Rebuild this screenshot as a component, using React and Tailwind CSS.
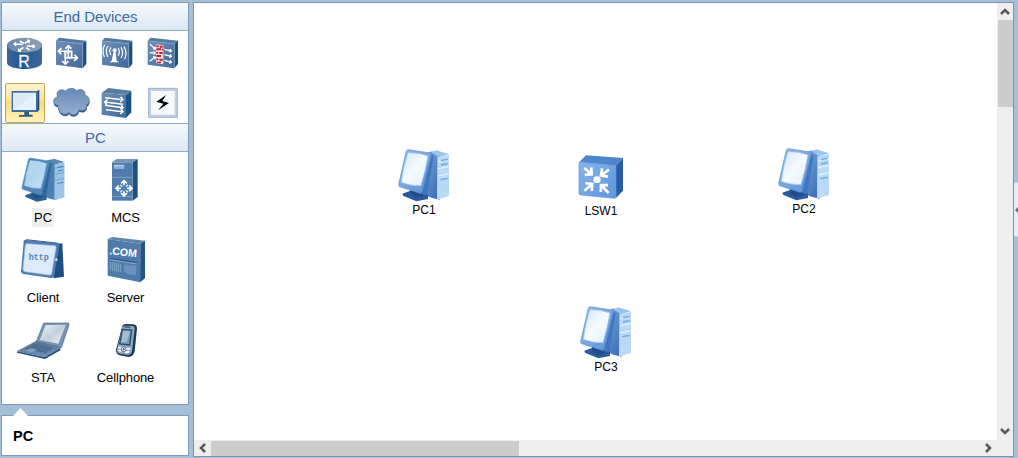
import React from "react";

const Defs = () => (
  <svg className="absolute h-0 w-0" aria-hidden="true">
    <defs>
      <linearGradient id="face" x1="0" y1="0" x2="1" y2="1">
        <stop offset="0" stopColor="#6f90b8" />
        <stop offset="1" stopColor="#42699a" />
      </linearGradient>
      <linearGradient id="drum" x1="0" y1="0" x2="1" y2="0">
        <stop offset="0" stopColor="#3b6698" />
        <stop offset="0.4" stopColor="#215a93" />
        <stop offset="1" stopColor="#3d6799" />
      </linearGradient>
      <linearGradient id="drumTop" x1="0" y1="0" x2="1" y2="0">
        <stop offset="0" stopColor="#6b88ad" />
        <stop offset="1" stopColor="#8d9fb9" />
      </linearGradient>
      <linearGradient id="cloud" x1="0" y1="0" x2="0" y2="1">
        <stop offset="0" stopColor="#6488b8" />
        <stop offset="1" stopColor="#9daed0" />
      </linearGradient>
      <linearGradient id="screen" x1="0" y1="0" x2="1" y2="1">
        <stop offset="0" stopColor="#d2e6f8" />
        <stop offset="0.5" stopColor="#f5faff" />
        <stop offset="1" stopColor="#e2effb" />
      </linearGradient>
      <linearGradient id="screenDim" x1="0" y1="0" x2="1" y2="1">
        <stop offset="0" stopColor="#9fc8e8" />
        <stop offset="1" stopColor="#c5e0f5" />
      </linearGradient>
      <linearGradient id="bezel" x1="0" y1="0" x2="1" y2="1">
        <stop offset="0" stopColor="#94bdea" />
        <stop offset="1" stopColor="#5a91d2" />
      </linearGradient>
      <linearGradient id="tower" x1="0" y1="0" x2="1" y2="1">
        <stop offset="0" stopColor="#7facdf" />
        <stop offset="1" stopColor="#3668b2" />
      </linearGradient>
      <linearGradient id="lsw" x1="0" y1="0" x2="1" y2="1">
        <stop offset="0" stopColor="#86b5ee" />
        <stop offset="1" stopColor="#5c95d8" />
      </linearGradient>
      <linearGradient id="laptop" x1="0" y1="0" x2="1" y2="1">
        <stop offset="0" stopColor="#edf3f9" />
        <stop offset="0.5" stopColor="#c2cfdf" />
        <stop offset="1" stopColor="#eef3f9" />
      </linearGradient>
      <linearGradient id="keys" x1="0" y1="0" x2="0" y2="1">
        <stop offset="0" stopColor="#587493" />
        <stop offset="1" stopColor="#6c8eb7" />
      </linearGradient>
      <linearGradient id="gold" x1="0" y1="0" x2="0" y2="1">
        <stop offset="0" stopColor="#fdf2cf" />
        <stop offset="0.4" stopColor="#fde7a5" />
        <stop offset="0.45" stopColor="#fcd97c" />
        <stop offset="1" stopColor="#fff5be" />
      </linearGradient>
    </defs>
  </svg>
);

const Arrow = ({ x1, y1, x2, y2, h = 7, w = 4, c = "#fff" }) => {
  const a = Math.atan2(y2 - y1, x2 - x1);
  const p = (d) => `${x2 - h * Math.cos(a + d)} ${y2 - h * Math.sin(a + d)}`;
  return (
    <path
      d={`M${x1} ${y1}L${x2} ${y2}M${p(0.8)}L${x2} ${y2}L${p(-0.8)}`}
      fill="none"
      stroke={c}
      strokeWidth={w}
    />
  );
};

const Block = ({ x, y }) => (
  <g transform={`translate(${x} ${y})`}>
    <path d="M0 9L9 0L91 9L80 18Z" fill="#52799f" />
    <path d="M80 18L91 9V79L80 92Z" fill="#195080" />
    <path d="M0 9L80 18V92L0 81Z" fill="url(#face)" />
    <path d="M1 10L80 18.500V91" fill="none" stroke="#8ba7c7" strokeWidth="1.500" />
  </g>
);

const Router = () => (
  <svg viewBox="6 93 138 138" className="size-[46px]">
    <path d="M21 134V188C23 213 124 213 126 188V134Z" fill="url(#drum)" />
    <ellipse cx="73.500" cy="136" rx="52.500" ry="22" fill="url(#drumTop)" stroke="#58779f" />
    <Arrow x1={68} y1={133} x2={43} y2={132} w={5} />
    <Arrow x1={81} y1={138} x2={103} y2={139} w={5} />
    <Arrow x1={74} y1={130} x2={88} y2={122} w={5} />
    <Arrow x1={70} y1={142} x2={56} y2={153} w={5} />
    <path d="M59 123L72 130M78 143L89 150" stroke="#fff" strokeWidth="5" />
    <text x="55" y="202" fontFamily="Liberation Sans" fontSize="48" fill="#f0f5fa" stroke="#f0f5fa">R</text>
  </svg>
);

const Switch = () => (
  <svg viewBox="144 93 138 138" className="size-[46px]">
    <Block x={168} y={113} />
    <path d="M196 154H215V174H196Z" fill="none" stroke="#fff" strokeWidth="5" />
    <Arrow x1={205} y1={174} x2={205} y2={137} h={13} w={5} />
    <Arrow x1={196} y1={154} x2={196} y2={192} h={13} w={5} />
    <Arrow x1={210} y1={155} x2={175} y2={153} h={13} w={5} />
    <Arrow x1={202} y1={172} x2={232} y2={174} h={13} w={5} />
  </svg>
);

const Wireless = () => (
  <svg viewBox="-3 93 138 138" className="size-[46px]">
    <Block x={21} y={113} />
    <circle cx="59" cy="151" r="6" fill="#fff" />
    <path d="M57 151L50 182L44 187H73L65 182L61 151Z" fill="#fff" />
    <path d="M48 142Q40 153 48 165M39 138Q29 153 39 171M29 134Q20 151 28 171M69 144Q77 155 69 167M78 142Q88 158 78 174M87 140Q98 158 89 178" fill="none" stroke="#fff" strokeWidth="3.500" />
  </svg>
);

const Firewall = () => (
  <svg viewBox="135 93 138 138" className="size-[46px]">
    <Block x={158} y={113} />
    <path d="M183 133L205 136V193L183 190Z" fill="#f3e8e8" />
    <path d="M184 136H191V142H184ZM194 137H203V143H194ZM184 145H198V151H184ZM201 146H204V152H201ZM184 155H190V161H184ZM193 156H203V162H193ZM184 165H198V171H184ZM184 175H190V181H184ZM193 176H203V182H193ZM185 185H198V190H185Z" fill="#bf1e2e" />
    <Arrow x1={165} y1={133} x2={181} y2={147} />
    <Arrow x1={164} y1={158} x2={181} y2={159} />
    <Arrow x1={164} y1={184} x2={181} y2={171} />
    <Arrow x1={208} y1={148} x2={229} y2={153} />
    <Arrow x1={208} y1={164} x2={229} y2={169} />
    <Arrow x1={208} y1={181} x2={229} y2={187} />
  </svg>
);

const EndDevice = () => (
  <svg viewBox="6 -3 138 138" className="size-[46px]">
    <rect x="16.500" y="16.500" width="117" height="117" rx="5" fill="url(#gold)" stroke="#c4a153" strokeWidth="3" />
    <path d="M112 38L118 35V96L111 102Z" fill="#1e4c7c" />
    <path d="M35 39H113V102H35Z" fill="#3f6b9d" />
    <path d="M39 44H108V96H39Z" fill="#dbe9f8" />
    <path d="M39 96L108 44V96Z" fill="#e7f1fc" />
    <path d="M73 102H87V110H98V116H57V111H73Z" fill="#2d5987" />
  </svg>
);

const cloudPath =
  "M174 82C155 80 157 60 173 56C165 40 183 29 197 39C205 29 222 28 229 38C244 29 259 39 254 51C271 55 272 73 260 80C261 96 247 101 237 95C232 112 213 115 207 103C194 116 173 105 174 82Z";

const Cloud = () => (
  <svg viewBox="144 -3 138 138" className="size-[46px]">
    <path d={cloudPath} transform="translate(1 6)" fill="#315f91" />
    <path d={cloudPath} fill="url(#cloud)" stroke="#54789f" strokeWidth="2" />
  </svg>
);

const Lines = () => (
  <svg viewBox="-3 -3 138 138" className="size-[46px]">
    <path d="M20 44L40 30L109 38L93 51Z" fill="#5b7f9f" />
    <path d="M93 51L109 38V103L93 120Z" fill="#1c5386" />
    <path d="M20 44L93 51V120L20 110Z" fill="url(#face)" />
    <Arrow x1={30} y1={59} x2={84} y2={65} h={11} w={4.5} />
    <Arrow x1={84} y1={79} x2={29} y2={72} h={11} w={4.5} />
    <Arrow x1={30} y1={82} x2={84} y2={89} h={9} w={4.5} />
    <Arrow x1={33} y1={95} x2={84} y2={101} h={11} w={4.5} />
  </svg>
);

const Bolt = () => (
  <svg viewBox="135 -3 138 138" className="size-[46px]">
    <rect x="161" y="31" width="86" height="87" fill="#c1d0e2" stroke="#9db2cc" strokeWidth="3" />
    <path d="M168 39H239V110H168Z" fill="#f8f9fb" />
    <path d="M213 51L184 71L205 77L189 97L222 75L202 69Z" fill="#08090b" />
  </svg>
);

const Computer = ({ dim, ...rest }) => (
  <svg viewBox="35 35 168 168" {...rest}>
    <path d="M119 54L143 45L166 56V190L141 184L110 170Z" fill={dim ? "#4c7fb2" : "url(#tower)"} />
    <path d="M141 48L156 42L194 54L163 63Z" fill={dim ? "#5d88b2" : "#98c4ec"} />
    <path d="M159 63L194 56V179L158 190Z" fill={dim ? "#9bc4e6" : "#b9d9f6"} />
    <path d="M161 76L194 70M161 97L194 91M161 119L194 112" stroke={dim ? "#6d9fce" : "#eef8ff"} strokeWidth="3" />
    <path d="M170 73L190 69M170 86L190 82M168 130L190 126" stroke={dim ? "#4f86ba" : "#6da2dc"} strokeWidth="4" />
    <path d="M54 172L82 162L131 174V188L96 195L56 178Z" fill={dim ? "#2c6094" : "#2c5a9e"} />
    <path d="M76 152L112 164L116 180L92 184L78 172Z" fill={dim ? "#225488" : "#234a8c"} />
    <path d="M138 52L148 60L129 176L104 171Z" fill={dim ? "#2f689f" : "#4078c0"} />
    <path d="M66 44Q68 40 73 40L137 50Q142 51 141 56L113 167Q111 172 105 170L46 151Q42 149 43 144Z" fill={dim ? "#5085b8" : "url(#bezel)"} stroke={dim ? "#5c8fbc" : "#5e90c8"} strokeWidth="2" />
    <path d="M71 49Q102 48 131 59Q124 101 110 148Q78 149 51 138Q57 90 71 49Z" fill={dim ? "url(#screenDim)" : "url(#screen)"} stroke={dim ? "#79a9d3" : "#a0c5ed"} strokeWidth="2" />
    {dim && <path d="M72 50Q102 49 130 60Q118 78 117 107Q84 94 58 101Z" fill="#b7d9f1" opacity=".7" />}
  </svg>
);

const PcItem = () => (
  <svg viewBox="6 6 246 168" className="h-14 w-[82px]">
    <Computer dim x="59" y="20" width="142" height="142" />
  </svg>
);

const Mcs = () => (
  <svg viewBox="252 6 246 168" className="h-14 w-[82px]">
    <path d="M336 37L350 27H413L398 37Z" fill="#7894b2" />
    <path d="M398 37L413 27V141L398 152Z" fill="#1f5080" />
    <path d="M336 37H398V152H336Z" fill="#4e7cad" />
    <path d="M343 45H373V57H343Z" fill="#8db2d5" />
    <path d="M344 54V46H372" fill="none" stroke="#d7e9f8" strokeWidth="2" />
    <path d="M336 82H398M336 140H398" stroke="#91b4d4" strokeWidth="2" />
    <Arrow x1={372} y1={106} x2={372} y2={92} h={12} w={5} />
    <Arrow x1={372} y1={124} x2={372} y2={138} h={12} w={5} />
    <Arrow x1={363} y1={115} x2={348} y2={115} h={12} w={5} />
    <Arrow x1={381} y1={115} x2={396} y2={115} h={12} w={5} />
    <path d="M361 104L367 110M378 110L384 104M361 127L367 121M378 121L384 127" stroke="#d8e7f5" strokeWidth="4" />
  </svg>
);

const Client = () => (
  <svg viewBox="6 246 246 168" className="h-14 w-[82px]">
    <path d="M176 281L187 280L192 380L160 385Z" fill="#1d4f83" />
    <path d="M79 270Q72 270 71 275L63 364Q63 370 70 372L153 384Q160 385 162 379L178 286Q179 281 173 280Z" fill="#4e7daf" />
    <path d="M84 281Q77 280 76 286L69 358Q69 364 75 365L148 375Q154 376 155 371L168 293Q169 288 164 287Z" fill="#dceafb" stroke="#9fbfdf" strokeWidth="2" />
    <path d="M71 275L79 269L176 280" fill="none" stroke="#365f8e" strokeWidth="3" />
    <circle cx="169" cy="329" r="3.500" fill="#edf6ff" />
    <text x="86" y="331" fontFamily="Liberation Mono" fontSize="25" fontWeight="bold" fill="#5983b3">http</text>
  </svg>
);

const Server = () => (
  <svg viewBox="252 246 246 168" className="h-14 w-[82px]">
    <path d="M323 267L337 261L435 272L421 281Z" fill="#6384a9" />
    <path d="M421 281L435 272V385L420 397Z" fill="#235583" />
    <path d="M323 267L421 281V397L323 377Z" fill="#4e7bac" />
    <text x="328" y="313" fontFamily="Liberation Sans" fontSize="32" fontWeight="bold" fill="#fff" transform="rotate(6 328 313)" textLength="82">.COM</text>
    <path d="M330 325L411 338" stroke="#244f80" strokeWidth="3" />
    <path d="M330 329L411 342M331 336V360M337 337V362M343 338V364M349 339V365M355 340V366M361 341V366M375 343V367M381 344V371M387 345V373M393 346V374M399 346V375M405 347V375" stroke="#a3c1dd" strokeWidth="2" />
  </svg>
);

const Laptop = () => (
  <svg viewBox="6 6 246 168" className="h-14 w-[82px]">
    <path d="M51 124L134 141L181 113V121L135 147L51 128Z" fill="#1f4f80" />
    <path d="M51 124L109 93L183 111L134 140Z" fill="url(#keys)" stroke="#486c94" />
    <path d="M131 39H206L207 46L184 113L109 94Z" fill="#7891ac" stroke="#526f91" strokeWidth="2" />
    <path d="M137 45L198 44L175 101L119 90Z" fill="url(#laptop)" />
    <path d="M74 116L105 101L160 113L137 129Z" fill="#47688b" />
    <path d="M83 112L145 126M92 108L151 121M99 104L156 116" stroke="#7796b6" />
    <path d="M77 122L93 115L111 119L96 127Z" fill="#84a2c0" />
  </svg>
);

const Phone = () => (
  <svg viewBox="252 6 246 168" className="h-14 w-[82px]">
    <path d="M367 48Q369 42 378 42L400 43Q411 45 411 55L404 124Q401 139 386 141L359 136Q348 131 348 119Z" fill="#1d3854" />
    <path d="M367 52Q369 47 377 47L398 48Q404 49 404 56L396 124Q394 134 384 135L361 131Q350 129 351 119Z" fill="#90a8c1" />
    <path d="M367 58L395 60L389 105L359 102Z" fill="#789ab9" stroke="#294866" strokeWidth="4" />
    <path d="M370 62L390 64L379 97L363 97Z" fill="#a3bdd2" />
    <path d="M373 51L391 52" stroke="#263f59" strokeWidth="3" />
    <path d="M354 112L365 114M379 116L391 117M355 121L364 124M375 127L388 125" stroke="#fff" strokeWidth="5" />
    <circle cx="371" cy="118" r="7" fill="#dce8f2" stroke="#355776" strokeWidth="2" />
    <circle cx="371" cy="118" r="3" fill="#42627e" />
  </svg>
);

const Lsw = () => (
  <svg viewBox="34 41 150 150" className="size-[50px]">
    <path d="M43 66L64 45L175 53L154 76Z" fill="#4d86cb" />
    <path d="M154 76L175 53V151L153 174Z" fill="#285da5" />
    <path d="M46 65Q43 65 43 70V159Q43 163 48 164L148 174Q154 174 154 168V81Q154 76 149 75Z" fill="url(#lsw)" stroke="#6099da" strokeWidth="2" />
    <ellipse cx="97" cy="118" rx="11" ry="10" fill="#fff" />
    <Arrow x1={59} y1={83} x2={81} y2={102} h={21} w={8} />
    <Arrow x1={133} y1={88} x2={109} y2={105} h={21} w={8} />
    <Arrow x1={59} y1={151} x2={83} y2={131} h={21} w={8} />
    <Arrow x1={132} y1={158} x2={109} y2={134} h={21} w={8} />
  </svg>
);

const Header = ({ children, className }) => (
  <div className={`flex items-center justify-center border-[#91aaca] bg-linear-to-b from-[#f5f9fc] to-[#dce8f4] pl-px text-[15px] leading-5 text-[#3d69a0] ${className}`}>
    {children}
  </div>
);

const categories = [Router, Switch, Wireless, Firewall, EndDevice, Cloud, Lines, Bolt];
const devices = [
  ["PC", PcItem],
  ["MCS", Mcs],
  ["Client", Client],
  ["Server", Server],
  ["STA", Laptop],
  ["Cellphone", Phone],
];

const Chevron = ({ d }) => (
  <svg viewBox="0 0 10 10" className="size-[10px]">
    <path d={d} fill="none" stroke="#555a60" strokeWidth="2.500" />
  </svg>
);

const Node = ({ className, label, children }) => (
  <div className={`absolute flex w-14 flex-col items-center ${className}`}>
    {children}
    <span className="text-[12px] leading-[14px]">{label}</span>
  </div>
);

const PcNode = ({ className, label }) => (
  <Node className={className} label={label}>
    <Computer viewBox="35 32 168 168" className="size-14" />
  </Node>
);

export default function App() {
  return (
    <div className="flex h-[458px] w-[1018px] overflow-hidden bg-[#a5bfd7] pt-[2px] pl-px font-['Liberation_Sans',Arial,sans-serif] text-black">
      <Defs />
      <aside className="flex w-[188px] flex-col">
        <section className="h-[403px] border border-[#7e9bb8] bg-white">
          <Header className="h-7 border-b pt-px">End Devices</Header>
          <div className="grid h-[92px] grid-cols-[repeat(4,46px)]">
            {categories.map((Icon, i) => (
              <Icon key={i} />
            ))}
          </div>
          <Header className="h-[29px] border-y">PC</Header>
          <div className="grid grid-cols-[82px_82px] grid-rows-[80px_80px_80px]">
            {devices.map(([name, Icon], i) => (
              <div key={name} className="flex flex-col items-center">
                <Icon />
                <span className={`px-[2px] text-[13px] leading-[19px] tracking-[-0.12px] ${i === 0 ? "bg-[#eeeeee]" : ""} ${i % 2 ? "ml-px" : ""}`}>{name}</span>
              </div>
            ))}
          </div>
        </section>
        <svg viewBox="0 0 188 10" className="relative z-10 -mb-px h-[11px] w-[188px] shrink-0" preserveAspectRatio="none">
          <path d="M12 10L19.500 2.700L27 10Z" fill="#fff" />
        </svg>
        <section className="flex h-[41px] shrink-0 items-center border border-[#7e9bb8] bg-white pt-[2px] pl-[11px] text-[14.5px] font-bold">
          PC
        </section>
      </aside>
      <main className="ml-1 grid h-[455px] w-[821px] grid-cols-[1fr_16px] grid-rows-[1fr_16px] border border-[#7596b5] bg-white">
        <div className="relative">
          <PcNode label="PC1" className="top-[144px] left-[202px]" />
          <Node label="LSW1" className="top-[151px] left-[379px]">
            <Lsw />
          </Node>
          <PcNode label="PC2" className="top-[143px] left-[582px]" />
          <PcNode label="PC3" className="top-[301px] left-[384px]" />
        </div>
        <div className="flex flex-col items-center bg-[#eeeeee]">
          <div className="flex h-[17px] items-center"><Chevron d="M1 7L5 3L9 7" /></div>
          <div className="h-[87px] w-[15px] bg-[#cccccc]" />
          <div className="mt-auto mb-px flex h-[17px] items-center"><Chevron d="M1 3L5 7L9 3" /></div>
        </div>
        <div className="flex items-center bg-[#eeeeee]">
          <div className="flex w-[17px] justify-center"><Chevron d="M7 1L3 5L7 9" /></div>
          <div className="h-[15px] w-[308px] bg-[#cccccc]" />
          <div className="mr-px ml-auto flex w-[17px] justify-center"><Chevron d="M3 1L7 5L3 9" /></div>
        </div>
        <div className="bg-[#eeeeee]" />
      </main>
      <div className="mt-[180px] flex h-[55px] w-1 items-center justify-end rounded-l-xs border-y border-[#c3d6e8] bg-[#e2effa]">
        <svg viewBox="0 0 3 6" className="h-[6px] w-[3px]">
          <path d="M3 0L0 3L3 6Z" fill="#527496" />
        </svg>
      </div>
    </div>
  );
}
